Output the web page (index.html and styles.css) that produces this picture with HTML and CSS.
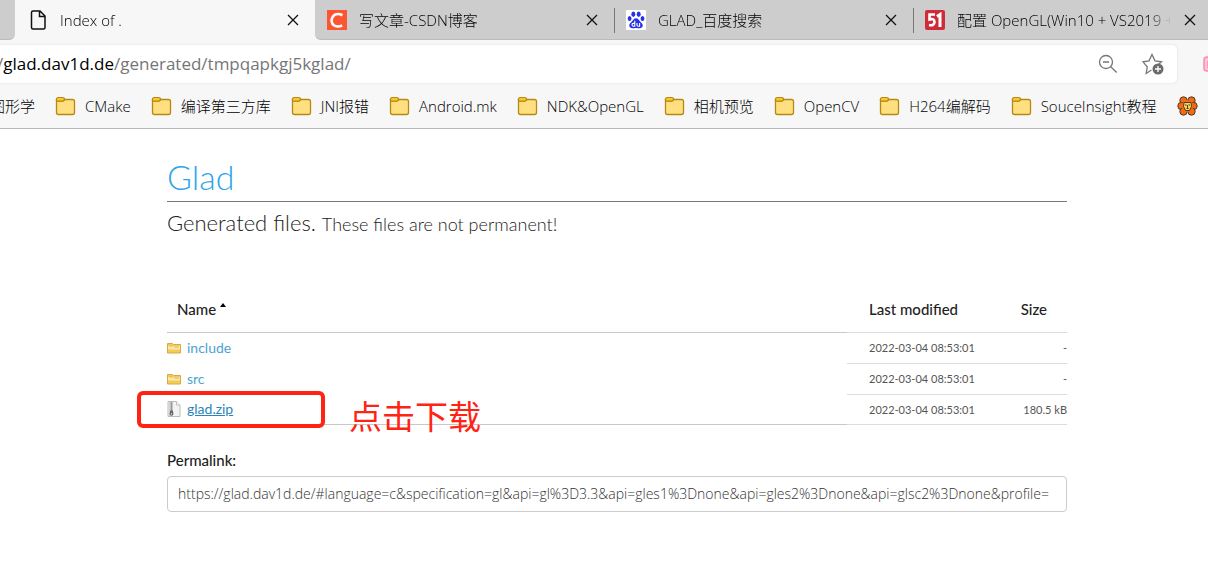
FILE: index.html
```html
<!DOCTYPE html>
<html lang="zh-CN">
<head>
    <meta charset="UTF-8">
    <meta name="viewport" content="width=device-width, initial-scale=1.0">
    <title>Index of .</title>
    <link rel="stylesheet" href="styles.css">
</head>
<body>
    <!-- shared icons -->
    <svg class="sprite" aria-hidden="true">
        <symbol id="close" viewBox="0 0 12 12">
            <path d="M1 1l10 10M11 1L1 11" fill="none" stroke="#111" stroke-width="1.3"/>
        </symbol>
        <symbol id="bookmark-folder" viewBox="0 0 21 20">
            <path d="M1.5 4.5V16.500q0 2 2 2h14q2 0 2-2V5.500q0-2-2-2H9.500L8 5z" fill="#ffdf80" stroke="#b58a14" stroke-width="1.300"/>
            <path d="M1.300 3.800Q1.300 1.500 3.500 1.500h4q2 0 2 1.700T7.500 5.200h-4q-2.200 0-2.200-1.400z" fill="#fcc62c" stroke="#b58a14" stroke-width="1.200"/>
        </symbol>
        <symbol id="folder" viewBox="0 0 14 12">
            <path d="M.5 1.500h5l1 1h7v8.500H.5z" fill="#f3cb59" stroke="#dca843"/>
            <path d="M1 4h12v3.500H1z" fill="#fbe9a8"/>
            <path d="M2.500 4h3M7 5h5" stroke="#dfb14c"/>
        </symbol>
        <symbol id="zip" viewBox="0 0 14 16">
            <path d="M1 .5h8.500l3.500 3.500v11.500H1z" fill="#f3f3f3" stroke="#bdbdbd"/>
            <path d="M9.500.5V4H13" fill="#fff" stroke="#bdbdbd"/>
            <path d="M2 1h4v14H2z" fill="#d2d2d2"/>
            <path d="M4.500 1v9" stroke="#999" stroke-width="1.500"/>
            <path d="M3.300 9.500h2.500l.7 3.500-1 1.500h-2l-1-1.500z" fill="#666"/>
            <circle cx="4.500" cy="12.700" r=".7" fill="#ddd"/>
        </symbol>
    </svg>

    <header class="browser">
        <div class="tabs">
            <div class="tab-edge"></div>
            <div class="tab active">
                <svg class="favicon" viewBox="0 0 20 20">
                    <path d="M5 1h7l5 5v11.500q0 1.500-1.500 1.500H5q-1.500 0-1.500-1.500v-15Q3.500 1 5 1zM11.500 1v5.500H17" fill="none" stroke="#111" stroke-width="1.500"/>
                </svg>
                <span class="title">Index of .</span>
                <button class="close" aria-label="Close tab"><svg><use href="#close"/></svg></button>
            </div>
            <div class="tab">
                <svg class="favicon" viewBox="0 0 20 20">
                    <rect width="20" height="20" fill="#fc5531"/>
                    <path d="M15.500 5.200Q9 2.300 5.800 6.700 3 11.500 6.500 15q3.500 2.700 8.700.5" fill="none" stroke="#fff" stroke-width="2.600"/>
                </svg>
                <span class="title">写文章-CSDN博客</span>
                <button class="close" aria-label="Close tab"><svg><use href="#close"/></svg></button>
            </div>
            <div class="tab">
                <svg class="favicon" viewBox="0 0 20 20">
                    <rect width="20" height="20" rx="1" fill="#fff"/>
                    <g fill="#2932e1">
                        <ellipse cx="7.300" cy="4.200" rx="2" ry="2.700"/>
                        <ellipse cx="12.700" cy="4.200" rx="2" ry="2.700"/>
                        <ellipse cx="3.600" cy="8.500" rx="1.900" ry="2.500"/>
                        <ellipse cx="16.500" cy="8.500" rx="1.900" ry="2.500"/>
                        <path d="M10 8.300q2 0 3.300 2.200 1.200 1.600 2.800 3 1.500 2 0 3.800-1.500 1.500-4 .9-2.100-.4-4.200 0-2.500.6-4-.9-1.500-1.800 0-3.800 1.600-1.400 2.800-3Q8 8.300 10 8.300z"/>
                    </g>
                    <path d="M8.800 10.800v5.400H7.300q-1.300 0-1.300-1.400t1.300-1.400h1.500M11 13v2q0 1.200 1.300 1.200h1.300V13" fill="none" stroke="#fff" stroke-width="1.100"/>
                </svg>
                <span class="title">GLAD_百度搜索</span>
                <button class="close" aria-label="Close tab"><svg><use href="#close"/></svg></button>
            </div>
            <div class="tab">
                <svg class="favicon" viewBox="0 0 20 20">
                    <rect width="20" height="20" rx="2" fill="#cf2c3a"/>
                    <path d="M10 4.500H4.500V9.500Q9.500 8 9.500 12t-5.500 3" fill="none" stroke="#fff" stroke-width="2.600"/>
                    <path d="M12 6.500l3-2V17" fill="none" stroke="#fff" stroke-width="3"/>
                </svg>
                <span class="title">配置 OpenGL(Win10 + VS2019 +</span>
                <button class="close" aria-label="Close tab"><svg><use href="#close"/></svg></button>
            </div>
        </div>

        <div class="toolbar">
            <div class="address">
                <p class="url"><span>/</span>glad.dav1d.de<span>/generated/tmpqapkgj5kglad/</span></p>
                <button aria-label="Zoom out">
                    <svg width="20" height="20" viewBox="0 0 20 20" fill="none" stroke="#767676" stroke-width="1.300">
                        <circle cx="8" cy="8" r="6.500"/>
                        <path d="M5 8h6M12.700 12.700l6 5.800"/>
                    </svg>
                </button>
                <button aria-label="Add to favourites">
                    <svg width="22" height="22" viewBox="0 0 22 22">
                        <path d="M9.500 17l-5.300 3.500 1.100-6.500L1 8.800l6-.9L10 1.500l3 6.400 6.500.9-3 2.800" fill="none" stroke="#767676" stroke-width="1.300"/>
                        <circle cx="16" cy="16" r="5.500" fill="#6b6b6b"/>
                        <path d="M13 16h6M16 13v6" stroke="#fff" stroke-width="1.300"/>
                    </svg>
                </button>
            </div>
            <svg class="extension" width="20" height="20" viewBox="0 0 20 20">
                <rect x="1" y="3" width="18" height="14" rx="3" fill="#ffc4d6" stroke="#f48fb1" stroke-width="1.500"/>
                <path d="M5 1l3 2M5 7v6h4M5 10h4M5 7h4" fill="none" stroke="#f48fb1" stroke-width="1.500"/>
            </svg>
        </div>

        <nav class="bookmarks">
            <a href="#">图形学</a>
            <a href="#"><svg><use href="#bookmark-folder"/></svg>CMake</a>
            <a href="#"><svg><use href="#bookmark-folder"/></svg>编译第三方库</a>
            <a href="#"><svg><use href="#bookmark-folder"/></svg>JNI报错</a>
            <a href="#"><svg><use href="#bookmark-folder"/></svg>Android.mk</a>
            <a href="#"><svg><use href="#bookmark-folder"/></svg>NDK&amp;OpenGL</a>
            <a href="#"><svg><use href="#bookmark-folder"/></svg>相机预览</a>
            <a href="#"><svg><use href="#bookmark-folder"/></svg>OpenCV</a>
            <a href="#"><svg><use href="#bookmark-folder"/></svg>H264编解码</a>
            <a href="#"><svg><use href="#bookmark-folder"/></svg>SouceInsight教程</a>
            <a href="#" aria-label="Lion">
                <svg viewBox="0 0 21 20">
                    <g fill="#f26a12" stroke="#4a3b2c">
                        <circle cx="6.500" cy="4.500" r="3.700"/>
                        <circle cx="14.500" cy="4.500" r="3.700"/>
                        <circle cx="4.500" cy="10" r="3.700"/>
                        <circle cx="16.500" cy="10" r="3.700"/>
                        <circle cx="6.500" cy="15.500" r="3.700"/>
                        <circle cx="14.500" cy="15.500" r="3.700"/>
                    </g>
                    <circle cx="10.500" cy="10" r="6" fill="#f26a12"/>
                    <path d="M7 6.500h7l.5 4-2 4h-4l-2-4z" fill="#f7d154" stroke="#4a3b2c"/>
                    <path d="M8 9h1.500M11.500 9H13M10.500 9v3M9.500 12.500h2" stroke="#4a3b2c"/>
                </svg>
            </a>
        </nav>
    </header>

    <main class="container">
        <h1>Glad</h1>
        <h2>Generated files. <small>These files are not permanent!</small></h2>

        <table>
            <thead>
                <tr>
                    <th class="name">Name <svg class="sort" viewBox="0 0 6 4"><path d="M0 4l3-4 3 4z"/></svg></th>
                    <th class="modified">Last modified</th>
                    <th class="size">Size</th>
                </tr>
            </thead>
            <tbody>
                <tr>
                    <td class="name"><div class="file"><svg><use href="#folder"/></svg><a href="#">include</a></div></td>
                    <td class="modified">2022-03-04 08:53:01</td>
                    <td class="size">-</td>
                </tr>
                <tr>
                    <td class="name"><div class="file"><svg><use href="#folder"/></svg><a href="#">src</a></div></td>
                    <td class="modified">2022-03-04 08:53:01</td>
                    <td class="size">-</td>
                </tr>
                <tr>
                    <td class="name">
                        <div class="file">
                            <svg class="zip"><use href="#zip"/></svg><a class="hovered" href="#">glad.zip</a>
                            <div class="marker"></div>
                            <span class="note">点击下载</span>
                        </div>
                    </td>
                    <td class="modified">2022-03-04 08:53:01</td>
                    <td class="size">180.5 kB</td>
                </tr>
            </tbody>
        </table>

        <label for="permalink">Permalink:</label>
        <input type="text" id="permalink" readonly value="https://glad.dav1d.de/#language=c&amp;specification=gl&amp;api=gl%3D3.3&amp;api=gles1%3Dnone&amp;api=gles2%3Dnone&amp;api=glsc2%3Dnone&amp;profile=">
    </main>
</body>
</html>
```
FILE: styles.css
```css
:root {
    --chrome: #f7f7f7;
    --tab-bar: #cdcdcd;
    --link: #4ba3d3;
    --marker: #ff2314;
}
* {
    box-sizing: border-box;
}
body {
    margin: 0;
    background: white;
    color: #222;
    font-family: Lato, "Noto Sans CJK SC", sans-serif;
    overflow-x: hidden;
}
button {
    padding: 0;
    border: none;
    background: none;
    cursor: pointer;
}
.sprite {
    display: none;
}

/* browser window */
.browser {
    background: var(--chrome);
    border-bottom: 1px solid #b8b8b8;
    color: black;
    font: 300 15px "Open Sans", "Noto Sans CJK SC", sans-serif;
    overflow: hidden;
}
.tabs {
    display: flex;
    height: 40px;
    background: var(--chrome);
}
.tab-edge {
    flex: 0 0 15px;
    background: var(--tab-bar);
    border-bottom: 1px solid #bbb;
    border-bottom-right-radius: 6px;
}
.tab {
    display: flex;
    flex: 0 0 299px;
    align-items: center;
    gap: 12px;
    min-width: 0;
    padding: 0 16px 0 12px;
    background: var(--tab-bar);
    border-bottom: 1px solid #bbb;
}
.tab.active {
    flex-basis: 300px;
    padding-left: 13px;
    background: var(--chrome);
    border-bottom: none;
    border-radius: 6px 6px 0 0;
}
.tab.active + .tab {
    border-bottom-left-radius: 6px;
}
.tab + .tab + .tab + .tab,
.tab.active + .tab + .tab {
    background: linear-gradient(#777, #777) 0 8px / 1px 25px no-repeat var(--tab-bar);
}
.favicon {
    flex: none;
    width: 20px;
    height: 20px;
}
.title {
    flex: 1;
    line-height: 24px;
    overflow: hidden;
    white-space: nowrap;
    -webkit-mask-image: linear-gradient(to left, transparent, black 24px);
    mask-image: linear-gradient(to left, transparent, black 24px);
}
.close,
.close svg {
    display: block;
    flex: none;
    width: 12px;
    height: 12px;
}
.toolbar {
    display: flex;
    align-items: center;
    gap: 26px;
    padding-top: 5px;
}
.address {
    display: flex;
    flex: 1;
    align-items: center;
    gap: 24px;
    height: 38px;
    padding-right: 13px;
    background: white;
    border-radius: 0 5px 5px 0;
    box-shadow: 0 0 3px rgba(0, 0, 0, 0.1);
}
.address svg {
    display: block;
}
.url {
    flex: 1;
    margin: 0 0 0 -3px;
    font-size: 17px;
    font-weight: 400;
    line-height: 24px;
}
.url span {
    color: #767676;
}
.extension {
    flex: none;
    margin-right: -15px;
}
.bookmarks {
    display: flex;
    align-items: center;
    gap: 20px;
    height: 45px;
    margin-left: -10px;
}
.bookmarks a {
    display: flex;
    flex: none;
    align-items: center;
    gap: 9px;
    color: black;
    line-height: 24px;
    text-decoration: none;
}
.bookmarks svg {
    width: 21px;
    height: 20px;
}

/* directory listing */
.container {
    max-width: 926px;
    margin: 0 auto;
    padding: 28px 0 40px 26px;
}
h1 {
    margin: 0;
    padding-bottom: 4px;
    border-bottom: 1px solid #777;
    color: #2fa4e7;
    font-size: 34px;
    font-weight: 300;
    line-height: 40px;
}
h2 {
    margin: 5px 0 47px;
    font-size: 22px;
    font-weight: 300;
    line-height: 32px;
}
h2 small {
    font-size: 18px;
}
table {
    width: 100%;
    border-collapse: collapse;
}
th {
    height: 45px;
    padding: 0 0 0 10px;
    border-bottom: 1px solid #ddd;
    font-size: 15px;
    font-weight: 500;
    text-align: left;
}
td {
    height: 31px;
    padding: 0;
    border-bottom: 1px solid #ddd;
    color: #555;
    font-size: 11px;
}
tr:last-child td {
    height: 30px;
}
td.name {
    border-bottom: none;
}
th.name,
tr:last-child td.name {
    border-bottom: 1px solid #c8c8c8;
}
.modified {
    width: 150px;
    padding-left: 22px;
}
.size {
    width: 70px;
    text-align: right;
}
th.size {
    padding-right: 20px;
}
.sort {
    width: 6px;
    height: 4px;
    vertical-align: 8px;
}
.file {
    position: relative;
    display: flex;
    align-items: center;
    gap: 6px;
    font-size: 14px;
}
.file svg {
    width: 14px;
    height: 12px;
}
.file .zip {
    height: 16px;
}
.file a {
    color: var(--link);
    line-height: 20px;
    text-decoration: none;
}
.file a.hovered,
.file a:hover {
    color: #2a86b8;
    text-decoration: underline;
}
.marker {
    position: absolute;
    top: -8px;
    left: -30px;
    width: 188px;
    height: 37px;
    border: 4px solid var(--marker);
    border-radius: 6px;
}
.note {
    position: absolute;
    top: -4px;
    left: 182px;
    color: var(--marker);
    font: 33px/40px "Noto Sans CJK SC", sans-serif;
    white-space: nowrap;
}
label {
    display: block;
    margin-top: 23px;
    font-size: 15px;
    font-weight: 500;
    line-height: 24px;
}
input {
    display: block;
    width: 100%;
    height: 36px;
    margin-top: 4px;
    padding: 0 10px;
    border: 1px solid #ccc;
    border-radius: 4px;
    color: #333;
    font: 300 14px "Open Sans", sans-serif;
}
```
